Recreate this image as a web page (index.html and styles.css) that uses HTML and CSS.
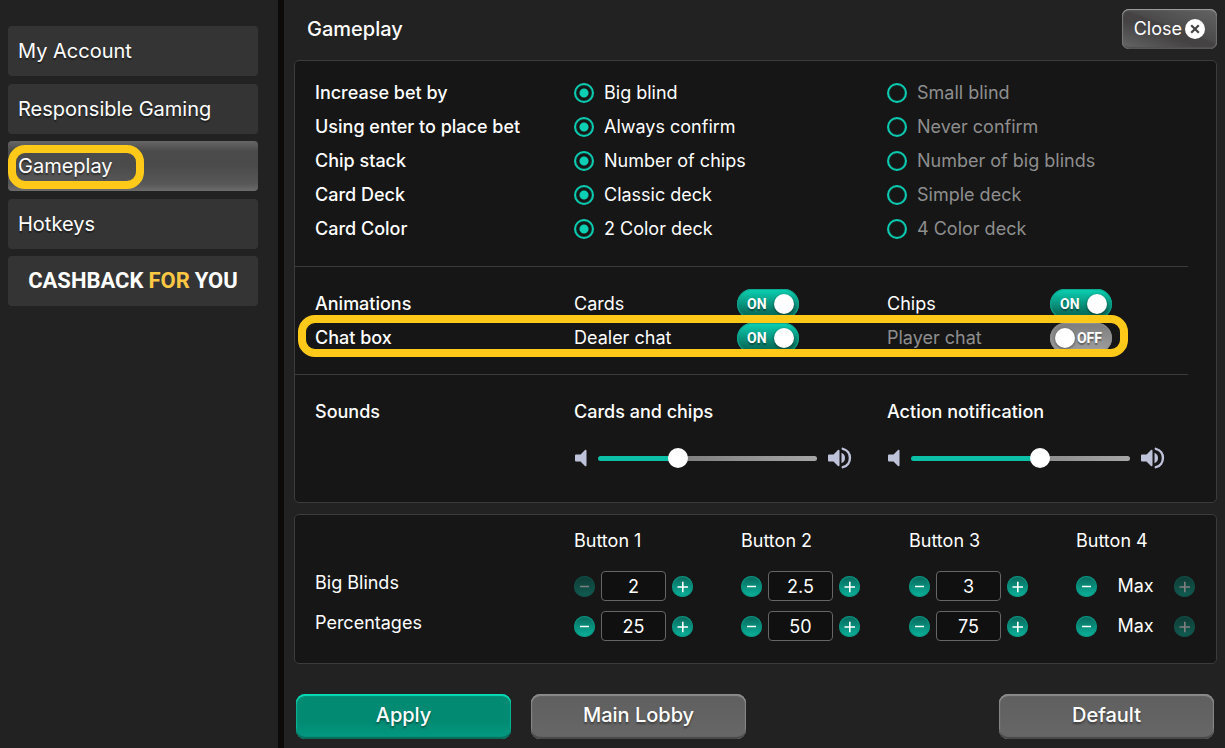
FILE: index.html
```html
<!DOCTYPE html>
<html lang="en">
<head>
<meta charset="utf-8">
<meta name="viewport" content="width=device-width, initial-scale=1">
<title>Gameplay settings</title>
<link rel="stylesheet" href="styles.css">
</head>
<body>
<svg width="0" height="0" class="sprite" aria-hidden="true">
  <symbol id="mute" viewBox="0 0 13 18"><path d="M2 5.500h4.500L11 1q1.500-1 1.500 1v14q0 2-1.500 1l-4.500-4.500H2q-1 0-1-1v-5q0-1 1-1z"/></symbol>
  <symbol id="loud" viewBox="0 0 24 22"><path d="M1 7.500h4.500L10 3q1.500-1 1.500 1v14q0 2-1.500 1l-4.500-4.500H1q-1 0-1-1v-5q0-1 1-1z"/><path d="M13.500 5.800q3.500 1.500 3.500 5.200t-3.500 5.200z"/><path d="M14.800 1.800c9.500 2.200 9.500 16.200 0 18.400" fill="none" stroke="currentColor" stroke-width="2.400" stroke-linecap="round"/></symbol>
  <symbol id="minus" viewBox="0 0 21 21"><path d="M6 10.500h9" stroke="currentColor" stroke-width="1.500"/></symbol>
  <symbol id="plus" viewBox="0 0 21 21"><path d="M5.500 11h10.500M10.800 5.800v10.400" stroke="currentColor" stroke-width="1.600"/></symbol>
</svg>

<aside class="sidebar">
  <nav class="nav">
    <a class="nav-item" href="#account">My Account</a>
    <a class="nav-item" href="#responsible">Responsible Gaming</a>
    <a class="nav-item active" href="#gameplay" aria-current="page">Gameplay<span class="mark mark-nav"></span></a>
    <a class="nav-item" href="#hotkeys">Hotkeys</a>
    <a class="nav-item promo" href="#cashback"><span>CASHBACK</span> <span class="gold">FOR</span> <span>YOU</span></a>
  </nav>
</aside>

<main class="main">
  <header class="header">
    <h1 class="title">Gameplay</h1>
    <button class="close" type="button">Close
      <svg width="20" height="20" viewBox="0 0 20 20" aria-hidden="true"><circle cx="10" cy="10" r="10" fill="#fff"/><path d="M6.200 6.200l7.600 7.600M13.800 6.200l-7.600 7.600" stroke="#444" stroke-width="2.200"/></svg>
    </button>
  </header>

  <section class="panel">
    <div class="group">
      <div class="row" role="radiogroup" aria-labelledby="l1">
        <span class="name" id="l1">Increase bet by</span>
        <label class="choice"><input type="radio" name="bet" checked><span>Big blind</span></label>
        <label class="choice"><input type="radio" name="bet"><span>Small blind</span></label>
      </div>
      <div class="row" role="radiogroup" aria-labelledby="l2">
        <span class="name" id="l2">Using enter to place bet</span>
        <label class="choice"><input type="radio" name="enter" checked><span>Always confirm</span></label>
        <label class="choice"><input type="radio" name="enter"><span>Never confirm</span></label>
      </div>
      <div class="row" role="radiogroup" aria-labelledby="l3">
        <span class="name" id="l3">Chip stack</span>
        <label class="choice"><input type="radio" name="stack" checked><span>Number of chips</span></label>
        <label class="choice"><input type="radio" name="stack"><span>Number of big blinds</span></label>
      </div>
      <div class="row" role="radiogroup" aria-labelledby="l4">
        <span class="name" id="l4">Card Deck</span>
        <label class="choice"><input type="radio" name="deck" checked><span>Classic deck</span></label>
        <label class="choice"><input type="radio" name="deck"><span>Simple deck</span></label>
      </div>
      <div class="row" role="radiogroup" aria-labelledby="l5">
        <span class="name" id="l5">Card Color</span>
        <label class="choice"><input type="radio" name="color" checked><span>2 Color deck</span></label>
        <label class="choice"><input type="radio" name="color"><span>4 Color deck</span></label>
      </div>
    </div>

    <div class="group">
      <div class="row">
        <span class="name">Animations</span>
        <label class="toggle">Cards<span class="switch on"><input type="checkbox" checked>ON<i class="knob"></i></span></label>
        <label class="toggle">Chips<span class="switch on"><input type="checkbox" checked>ON<i class="knob"></i></span></label>
      </div>
      <div class="row">
        <span class="name">Chat box</span>
        <label class="toggle">Dealer chat<span class="switch on"><input type="checkbox" checked>ON<i class="knob"></i></span></label>
        <label class="toggle muted">Player chat<span class="switch off"><input type="checkbox"><i class="knob"></i>OFF</span></label>
        <span class="mark mark-chat"></span>
      </div>
    </div>

    <div class="group sounds">
      <div class="row">
        <span class="name">Sounds</span>
        <label class="name" for="vol-cards">Cards and chips</label>
        <label class="name" for="vol-action">Action notification</label>
      </div>
      <div class="row">
        <span></span>
        <div class="volume">
          <svg class="mute-icon"><use href="#mute"/></svg>
          <input id="vol-cards" type="range" min="0" max="100" value="35" style="--value:35%">
          <svg class="loud-icon"><use href="#loud"/></svg>
        </div>
        <div class="volume">
          <svg class="mute-icon"><use href="#mute"/></svg>
          <input id="vol-action" type="range" min="0" max="100" value="60" style="--value:60%">
          <svg class="loud-icon"><use href="#loud"/></svg>
        </div>
      </div>
    </div>
  </section>

  <section class="panel bets">
    <span></span>
    <span>Button 1</span><span>Button 2</span><span>Button 3</span><span>Button 4</span>

    <span class="bet-name">Big Blinds</span>
    <div class="stepper">
      <button type="button" aria-label="Decrease" disabled><svg><use href="#minus"/></svg></button>
      <input type="text" aria-label="Big Blinds, Button 1" value="2">
      <button type="button" aria-label="Increase"><svg><use href="#plus"/></svg></button>
    </div>
    <div class="stepper">
      <button type="button" aria-label="Decrease"><svg><use href="#minus"/></svg></button>
      <input type="text" aria-label="Big Blinds, Button 2" value="2.5">
      <button type="button" aria-label="Increase"><svg><use href="#plus"/></svg></button>
    </div>
    <div class="stepper">
      <button type="button" aria-label="Decrease"><svg><use href="#minus"/></svg></button>
      <input type="text" aria-label="Big Blinds, Button 3" value="3">
      <button type="button" aria-label="Increase"><svg><use href="#plus"/></svg></button>
    </div>
    <div class="stepper">
      <button type="button" aria-label="Decrease"><svg><use href="#minus"/></svg></button>
      <span class="max">Max</span>
      <button type="button" aria-label="Increase" disabled><svg><use href="#plus"/></svg></button>
    </div>

    <span class="bet-name">Percentages</span>
    <div class="stepper">
      <button type="button" aria-label="Decrease"><svg><use href="#minus"/></svg></button>
      <input type="text" aria-label="Percentages, Button 1" value="25">
      <button type="button" aria-label="Increase"><svg><use href="#plus"/></svg></button>
    </div>
    <div class="stepper">
      <button type="button" aria-label="Decrease"><svg><use href="#minus"/></svg></button>
      <input type="text" aria-label="Percentages, Button 2" value="50">
      <button type="button" aria-label="Increase"><svg><use href="#plus"/></svg></button>
    </div>
    <div class="stepper">
      <button type="button" aria-label="Decrease"><svg><use href="#minus"/></svg></button>
      <input type="text" aria-label="Percentages, Button 3" value="75">
      <button type="button" aria-label="Increase"><svg><use href="#plus"/></svg></button>
    </div>
    <div class="stepper">
      <button type="button" aria-label="Decrease"><svg><use href="#minus"/></svg></button>
      <span class="max">Max</span>
      <button type="button" aria-label="Increase" disabled><svg><use href="#plus"/></svg></button>
    </div>
  </section>

  <footer class="actions">
    <button class="action primary" type="button">Apply</button>
    <button class="action" type="button">Main Lobby</button>
    <button class="action last" type="button">Default</button>
  </footer>
</main>
</body>
</html>
```
FILE: styles.css
```css
* { box-sizing: border-box; }

body {
  margin: 0;
  min-height: 100vh;
  display: flex;
  background: #222;
  color: #fff;
  font: 18px/24px Inter, "Liberation Sans", sans-serif;
}

button, input { font: inherit; color: inherit; margin: 0; }
button { cursor: pointer; }
.sprite { position: absolute; }

/* Sidebar */
.sidebar {
  flex: none;
  width: 284px;
  padding: 26px 20px 0 8px;
  border-right: 6px solid #0c0b0a;
}
.nav {
  display: flex;
  flex-direction: column;
  justify-content: space-between;
  min-height: 280px;
}
.nav-item {
  position: relative;
  display: flex;
  align-items: center;
  height: 50px;
  padding: 0 10px;
  border-radius: 4px;
  background: #343434;
  color: #fff;
  font-size: 20px;
  text-decoration: none;
  text-shadow: 0 2px 1px rgba(0, 0, 0, .4);
}
.nav-item.active {
  background: linear-gradient(#676767, #4b4b4b 20%, #4b4b4b 50%, #575757 85%, #6c6c6c);
}
.promo {
  justify-content: center;
  gap: 5px;
  font: 700 22px/24px Roboto, sans-serif;
  text-shadow: none;
}
.gold { color: #fcc844; }

/* Yellow outlines drawn over the content */
.mark {
  position: absolute;
  z-index: 2;
  border: 8px solid #ffc91a;
  border-radius: 17px;
  pointer-events: none;
}
.mark-nav { left: 0; top: 4px; width: 136px; height: 44px; }
.mark-chat { left: -17px; right: 60px; top: -6px; bottom: -2px; }

/* Main area */
.main {
  flex: 1;
  min-width: 0;
  padding: 9px 8px 9px 10px;
}
.header {
  display: flex;
  justify-content: space-between;
  align-items: center;
  padding-left: 13px;
  margin-bottom: 11px;
}
.title { margin: 0; font-size: 20px; font-weight: 500; }
.close {
  display: flex;
  align-items: center;
  gap: 3px;
  height: 40px;
  padding: 0 12px;
  border: 0;
  border-radius: 7px;
  background: linear-gradient(20deg, #686868, #444243 40%, #444243 52%, #4c4b4c 55%, #646464);
  box-shadow: inset 0 1px 1px #a2a2a2, inset 1px 0 1px #777, inset -1px 0 1px #6c6c6c, inset 0 -2px 1px #505050;
}

.panel {
  margin-bottom: 11px;
  border: 1px solid #3c3c3c;
  border-radius: 5px;
  background: #161616;
}
.group {
  margin-right: 28px;
  padding: 20px 0 19px 20px;
  border-bottom: 1px solid #3c3c3c;
}
.group:first-child { padding: 15px 0 20px 20px; }
.group:last-child { padding-bottom: 27px; border-bottom: 0; }
.row {
  position: relative;
  display: grid;
  grid-template-columns: 259fr 313fr 301fr;
  align-items: center;
  min-height: 34px;
}
.sounds { display: grid; gap: 12px; }
.name { font-weight: 500; }

.choice { display: flex; align-items: center; gap: 10px; color: #8e8e8e; }
.choice:has(:checked) { color: #fff; }
.choice input {
  appearance: none;
  width: 20px;
  height: 20px;
  border: 2px solid #0ccab0;
  border-radius: 50%;
  box-shadow: inset 0 0 1px #0ccab0;
}
.choice input:checked { background: radial-gradient(circle, #0ccfb4 4px, transparent 5px); }

.toggle {
  display: flex;
  align-items: center;
  justify-content: space-between;
  width: 225px;
}
.muted { color: #8e8e8e; }
.switch {
  position: relative;
  display: flex;
  align-items: center;
  justify-content: space-between;
  width: 62px;
  height: 30px;
  border-radius: 15px;
  color: #fff;
  font: 700 14px/20px Roboto, sans-serif;
  text-shadow: 0 2px 1px rgba(0, 0, 0, .35);
}
.switch input {
  position: absolute;
  inset: 0;
  opacity: 0;
}
.switch.on {
  padding: 0 5px 0 10px;
  background: linear-gradient(#0bd3b4, #087562 75%, #066555);
  box-shadow: inset 0 0 1px 1px #0ca68e;
}
.switch.off {
  padding: 0 10px 0 5px;
  background: linear-gradient(#7c7c7c, #a0a0a0);
  box-shadow: inset 0 0 1px 1px #8f8f8f;
}
.knob {
  width: 20px;
  height: 20px;
  border-radius: 50%;
  background: #fff;
  box-shadow: 0 1px 3px rgba(0, 0, 0, .5);
}

.volume {
  display: flex;
  align-items: center;
  width: 278px;
  color: #bfc3da;
}
.volume svg { flex: none; fill: currentColor; }
.mute-icon { width: 13px; height: 18px; margin-right: 11px; }
.loud-icon { width: 24px; height: 22px; margin-left: 11px; }
.volume input {
  flex: 1;
  min-width: 0;
  height: 20px;
  appearance: none;
  background: none;
}
.volume input::-webkit-slider-runnable-track {
  height: 5px;
  border-radius: 3px;
  background: linear-gradient(90deg, #0cbfa7 var(--value), transparent var(--value)), linear-gradient(90deg, #666, #a6a6a6);
}
.volume input::-webkit-slider-thumb {
  appearance: none;
  width: 20px;
  height: 20px;
  margin-top: -8px;
  border-radius: 50%;
  background: #fff;
}

/* Bet buttons */
.bets {
  display: grid;
  grid-template-columns: 259fr 167fr 168fr 167fr 119fr;
  row-gap: 10px;
  padding: 14px 21px 22px 20px;
  margin-bottom: 30px;
}
.bets > span:nth-child(-n+5) { margin-bottom: 8px; }
.stepper { display: flex; align-items: center; gap: 6px; height: 30px; }
.stepper button {
  flex: none;
  width: 21px;
  height: 21px;
  padding: 0;
  border: 0;
  border-radius: 50%;
  background: linear-gradient(#08665a, #0bb59d);
  box-shadow: inset 0 0 1px 1px #0a9582;
}
.stepper svg { display: block; width: 21px; height: 21px; }
.stepper button:disabled { opacity: .45; }
.stepper input {
  width: 65px;
  height: 30px;
  padding: 0;
  border: 1px solid #666;
  border-radius: 4px;
  background: #101010;
  text-align: center;
}
.max { width: 65px; text-align: center; }

/* Footer */
.actions { display: flex; gap: 20px; padding: 0 3px 0 2px; }
.action {
  width: 215px;
  height: 45px;
  padding: 0 0 3px;
  border: 0;
  border-radius: 9px;
  background: linear-gradient(#5f5f5f, #676767);
  box-shadow: inset 0 2px 1px #8c8c8c, inset 0 -2px 1px #484848, inset 1px 0 1px #909090, inset -1px 0 1px #909090;
  font-size: 20px;
  font-weight: 500;
  text-shadow: 0 2px 2px rgba(0, 0, 0, .4);
}
.primary {
  background: linear-gradient(#028a72 60%, #029a82);
  box-shadow: inset 0 2px 1px #08dcb8, inset 0 -2px 1px #0a6a58, inset 1px 0 1px #08b898, inset -1px 0 1px #08b898;
}
.last { margin-left: auto; }
```
